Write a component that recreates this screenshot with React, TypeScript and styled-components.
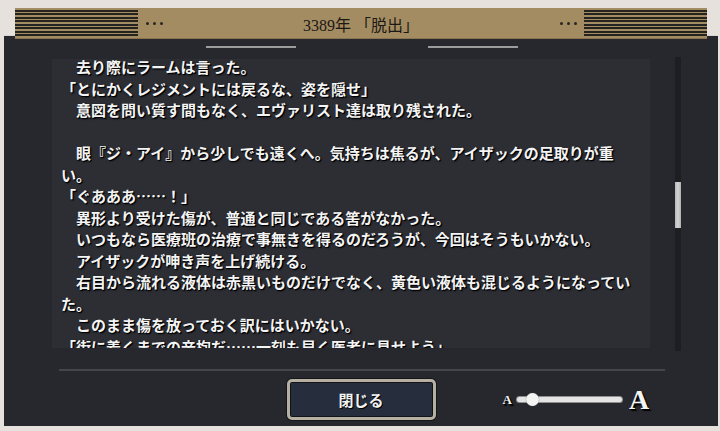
import React from 'react'
import styled, { createGlobalStyle } from 'styled-components'

const lines = [
    '　去り際にラームは言った。',
    '「とにかくレジメントには戻るな、姿を隠せ」',
    '　意図を問い質す間もなく、エヴァリスト達は取り残された。',
    '',
    '　眼『ジ・アイ』から少しでも遠くへ。気持ちは焦るが、アイザックの足取りが重い。',
    '「ぐあああ……！」',
    '　異形より受けた傷が、普通と同じである筈がなかった。',
    '　いつもなら医療班の治療で事無きを得るのだろうが、今回はそうもいかない。',
    '　アイザックが呻き声を上げ続ける。',
    '　右目から流れる液体は赤黒いものだけでなく、黄色い液体も混じるようになっていた。',
    '　このまま傷を放っておく訳にはいかない。',
    '「街に着くまでの辛抱だ……一刻も早く医者に見せよう」',
]

export default function App() {
    return (
        <Page>
            <GlobalStyle />
            <Header>
                <Stripes />
                <Dots><i /><i /><i /></Dots>
                <Title>3389年 「脱出」</Title>
                <Dots><i /><i /><i /></Dots>
                <Stripes />
            </Header>
            <Window>
                <Rulers>
                    <Ruler />
                    <Ruler />
                </Rulers>
                <Body>
                    <TextPanel>
                        <Story>
                            {lines.map((line, i) => (
                                <Para key={i}>{line || '\u00a0'}</Para>
                            ))}
                        </Story>
                    </TextPanel>
                    <Track>
                        <Thumb />
                    </Track>
                </Body>
                <Divider />
                <Footer>
                    <span />
                    <CloseButton>閉じる</CloseButton>
                    <SizeControl>
                        <Letter $size={13}>A</Letter>
                        <SliderTrack>
                            <SliderKnob />
                        </SliderTrack>
                        <Letter $size={28}>A</Letter>
                    </SizeControl>
                </Footer>
            </Window>
        </Page>
    )
}

const GlobalStyle = createGlobalStyle`
    html, body {
        margin: 0;
        padding: 0;
        background: #e6e1dc;
        overflow: hidden;
    }
`

const Page = styled.div`
    width: 720px;
    height: 431px;
    display: flex;
    flex-direction: column;
    padding-top: 8px;
    box-sizing: border-box;
    font-family: "Liberation Serif", "Noto Sans CJK JP", serif;
`

const Header = styled.div`
    position: relative;
    z-index: 2;
    margin: 0 13px 0 15px;
    height: 31px;
    background: #a38b62;
    border-bottom: 1px solid #8a7350;
    box-sizing: border-box;
    display: flex;
    align-items: stretch;
`

const Stripes = styled.div`
    width: 123px;
    margin: 2px 0 1px;
    background: repeating-linear-gradient(
        to bottom,
        #25231f 0px,
        #25231f 2px,
        #a38b62 2px,
        #a38b62 3.5px
    );
`

const Dots = styled.div`
    display: flex;
    align-items: center;
    gap: 4px;
    padding: 0 7px 0 8px;

    i {
        width: 3px;
        height: 3px;
        border-radius: 50%;
        background: #2a2520;
    }
`

const Title = styled.div`
    flex: 1;
    display: flex;
    align-items: center;
    justify-content: center;
    font-size: 16px;
    color: #1c1814;
    padding-top: 1px;
`

const Window = styled.div`
    margin: -4px 2px 0 4px;
    height: 391px;
    background: #27282d;
    border-top: 1px solid #d8d6d4;
    box-sizing: border-box;
    display: flex;
    flex-direction: column;
`

const Rulers = styled.div`
    display: flex;
    justify-content: center;
    gap: 132px;
    padding: 10px 0 0 2px;
    height: 2px;
`

const Ruler = styled.div`
    width: 90px;
    height: 2px;
    background: #9c9c9c;
`

const Body = styled.div`
    display: flex;
    align-items: flex-start;
    margin-top: 9px;
    padding-left: 48px;
`

const TextPanel = styled.div`
    width: 598px;
    height: 289px;
    margin-top: 2px;
    background: #2d2e34;
    overflow: hidden;
    padding-left: 9px;
    box-sizing: border-box;
`

const Story = styled.div`
    width: 575px;
    margin-top: -3px;
    font-family: "Noto Sans CJK JP", sans-serif;
    font-size: 15px;
    font-weight: 700;
    line-height: 21.5px;
    color: #f4f4f4;
    text-shadow: 1px 1px 0 #000, 1px 1px 2px #000;
`

const Para = styled.p`
    margin: 0;
`

const Track = styled.div`
    width: 6px;
    height: 294px;
    margin-left: 25px;
    background: #1d1e22;
    position: relative;
`

const Thumb = styled.div`
    position: absolute;
    left: 0;
    top: 125px;
    width: 6px;
    height: 46px;
    background: linear-gradient(to right, #b8b8b8, #d4d4d4 50%, #b0b0b0);
`

const Divider = styled.div`
    margin: 18px 53px 0 55px;
    height: 2px;
    background: #45464c;
`

const Footer = styled.div`
    display: grid;
    grid-template-columns: 1fr auto 1fr;
    align-items: center;
    margin-top: 8px;
`

const CloseButton = styled.button`
    width: 149px;
    height: 41px;
    border: 3px solid #b5b0a1;
    border-radius: 5px;
    box-shadow: 0 0 0 1px #15161a, inset 0 0 0 1px #111318;
    background: #262d3d;
    color: #f2f2f2;
    font-family: "Noto Sans CJK JP", sans-serif;
    font-weight: 700;
    font-size: 15px;
    text-shadow: 1px 1px 0 #000;
    cursor: pointer;
`

const SizeControl = styled.div`
    display: flex;
    align-items: center;
    padding-left: 67px;
    gap: 5px;
`

const Letter = styled.span<{ $size: number }>`
    font-family: "Liberation Serif", serif;
    font-weight: 700;
    font-size: ${p => p.$size}px;
    line-height: 1;
    color: #f4f4f4;
    text-shadow: 1px 1px 0 #000, 2px 2px 1px #000;
`

const SliderTrack = styled.div`
    position: relative;
    width: 105px;
    height: 5px;
    border-radius: 3px;
    background: #e4e4e4;
    box-shadow: 0 0 0 1px #8f8f8f;
    margin-right: 2px;
`

const SliderKnob = styled.div`
    position: absolute;
    left: 9px;
    top: -4px;
    width: 13px;
    height: 13px;
    border-radius: 50%;
    background: #f4f4f4;
    box-shadow: 0 0 1px #666;
`
